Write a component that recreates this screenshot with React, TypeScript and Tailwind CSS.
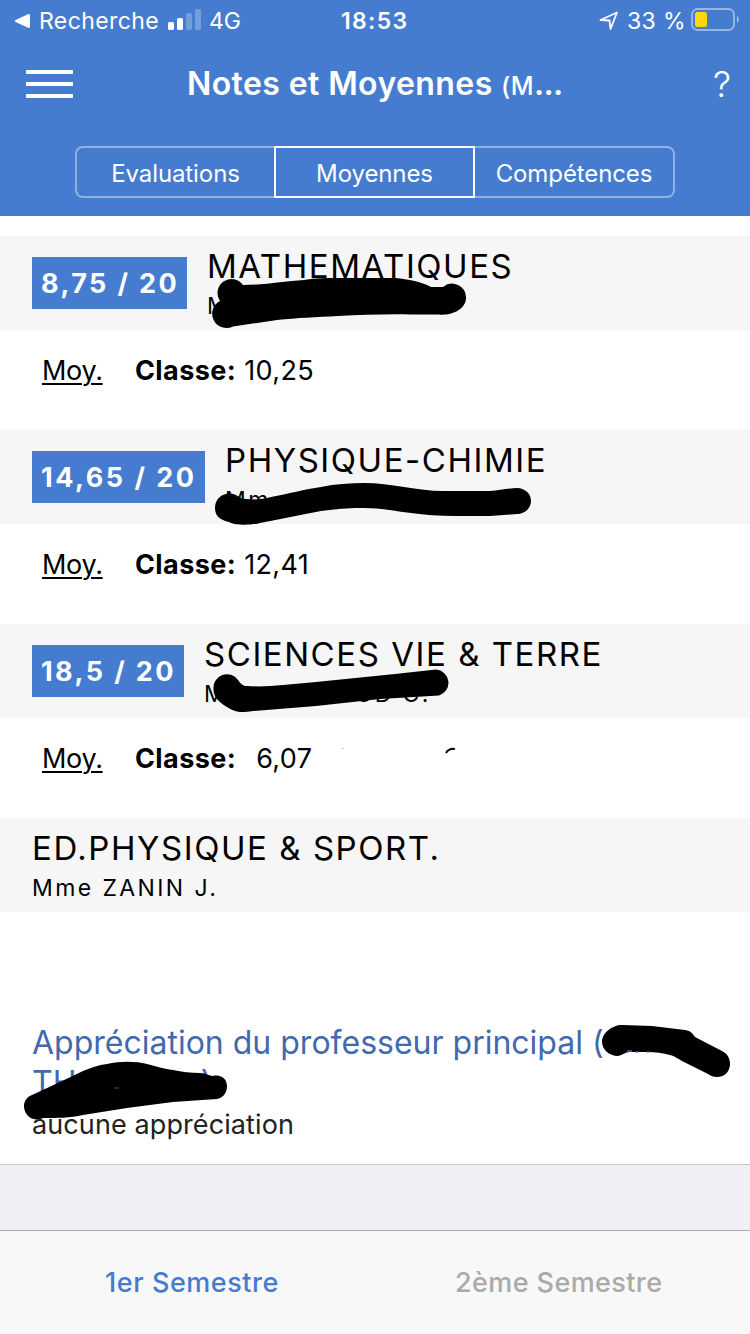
import React from 'react';
import clsx from 'clsx';

interface Subject {
    name: string;
    teacher: React.ReactNode;
    grade?: string;
    average?: string;
    averageClass?: string;
    badgeClass?: string;
}

const subjects: Subject[] = [
    { name: 'MATHEMATIQUES', teacher: 'M', grade: '8,75 / 20', average: '10,25', badgeClass: 'w-[155px] tracking-[2.4px]' },
    { name: 'PHYSIQUE-CHIMIE', teacher: 'Mm', grade: '14,65 / 20', average: '12,41', badgeClass: 'w-[173px] tracking-[2.5px]' },
    {
        name: 'SCIENCES VIE & TERRE',
        teacher: <>M<span className="ml-[128px]">UD C.</span></>,
        grade: '18,5 / 20',
        average: '6,07',
        averageClass: 'ml-[12px]',
        badgeClass: 'w-[152px] tracking-[2.4px]',
    },
    { name: 'ED.PHYSIQUE & SPORT.', teacher: 'Mme ZANIN J.' },
];

const tabs = ['Evaluations', 'Moyennes', 'Compétences'];

// Marker strokes hiding the names
const strokes = [
    'M220 301A13.500 13.500 0 0 1 243 285C264 285 285 281 304 280C316 278 326 278 338 278H396C407 279 423 282 431 287H443A14 14 0 0 1 466 298C466 309 452 316 439 314.500H410C385 314 362 315 338 316C316 317 297 318 277 320L233 326.500A13.500 13.500 0 0 1 220 301Z',
    'M215 508C215 497 225 492 233 494C240 496 240 499 246 499C255 500 264 499 271 497C288 494 305 489 321 487C335 484 350 483 364 483C378 483 390 485 404 487C418 489 430 491 443 491H490C501 490 509 488 518 488C526 489 531 494 531 501C531 508 525 514 517 514L490 516H455C439 516 425 515 411 513C395 511 380 508 364 508C349 508 335 509 321 511C300 515 281 519 260 523C253 525 236 526 229 522C220 520 215 516 215 508Z',
    'M213.500 689A13.500 13.500 0 0 1 238 680C241 684 243 686 247 686C260 687 271 686 283 685L316 682L395 674L436 669.500A13.300 13.300 0 0 1 439 695.500L380 699L316 706L253 711C239 713 235 712 227 707C220 703 213 697 213.500 689Z',
    'M24 1106C24 1101 27 1097 32 1095L60 1082L83 1071C91 1068 98 1065 107 1064C120 1061 135 1061 147 1064C156 1066 164 1069 173 1070C182 1072 191 1073 200 1073C206 1073 209 1076 213 1076C222 1074 227 1080 227 1086C227 1094 222 1098 217 1099L173 1102L127 1108L83 1115C70 1118 57 1118 43 1118C31 1123 24 1114 24 1106Z',
    'M602 1042C602 1033 612 1025 622 1025L652 1026L685 1030C691 1031 693 1034 695 1037L722 1051C728 1054 730 1059 730 1064C730 1071 725 1077 717 1077C713 1077 711 1076 708 1074L682 1061C678 1059 675 1056 670 1055C663 1053 655 1052 648 1052H630C625 1052 623 1055 618 1056C609 1056 602 1049 602 1042Z',
];

const StatusBar: React.FC = () => (
    <div className="flex h-[41px] items-center pt-px text-[23px] text-white">
        <svg className="ml-[14px]" width="17" height="16" viewBox="0 0 17 16">
            <path d="M1.5 7Q0 8 1.5 9L14 14.8Q16 15.5 16 13.5V2.5Q16 .5 14 1.2Z" fill="#fff" />
        </svg>
        <span className="ml-[8px] w-[129px] tracking-[0.4px]">Recherche</span>
        <svg className="-mt-[2px]" width="34" height="22" viewBox="0 0 34 22" fill="#fff">
            <rect x="0" y="13" width="6" height="8" rx="1.5" />
            <rect x="9" y="9" width="6" height="12" rx="1.5" />
            <rect x="18" y="4" width="6" height="17" rx="1.5" opacity=".25" />
            <rect x="27" y="0" width="6" height="21" rx="1.5" opacity=".25" />
        </svg>
        <span className="ml-[7px] w-[132px]">4G</span>
        <span className="w-[258px] font-semibold tracking-[1.3px]">18:53</span>
        <svg width="20" height="20" viewBox="0 0 20 20" fill="none" stroke="#fff" strokeWidth="1.8" strokeLinejoin="round">
            <path d="M1.5 9L18 1.5L11.500 18L10.500 9.500Z" />
        </svg>
        <span className="ml-[8px] w-[64px] tracking-[0.4px] whitespace-nowrap">33 %</span>
        <svg className="-mt-[2px]" width="50" height="24" viewBox="0 0 50 24">
            <rect x="1" y="1" width="42" height="21" rx="5.5" fill="none" stroke="#fff" strokeOpacity=".45" strokeWidth="1.8" />
            <rect x="4" y="4" width="12" height="15" rx="2.5" fill="#fed709" />
            <path d="M46 8C48.500 9.500 48.500 13.500 46 15Z" fill="#fff" fillOpacity=".5" />
        </svg>
    </div>
);

const SubjectRow: React.FC<{ subject: Subject }> = ({ subject }) => (
    <section className="h-[194px]">
        <div className="flex h-[94px] bg-[#f6f6f6] pl-8">
            {subject.grade && (
                <div className={clsx('mt-[21px] mr-5 flex h-[52px] shrink-0 items-center bg-[#467ccf] pt-[2px] pl-[9px] text-[27px] font-bold whitespace-nowrap text-white', subject.badgeClass)}>
                    {subject.grade}
                </div>
            )}
            <div className="whitespace-nowrap">
                <h2 className="mt-[10px] h-10 text-[33px] leading-10 tracking-[1.55px]">{subject.name}</h2>
                <p className="mt-[5px] text-[23px] leading-[30px] tracking-[2.4px]">{subject.teacher}</p>
            </div>
        </div>
        {subject.average && (
            <div className="flex h-[82px] items-center pl-[42px] text-[27px]">
                <span className="w-[93px] tracking-[-0.3px] underline decoration-2 underline-offset-3">Moy.</span>
                <b className="mr-[8px] font-bold tracking-[0.4px]">Classe:</b>
                <span className={clsx('tracking-[0.4px]', subject.averageClass)}>{subject.average}</span>
            </div>
        )}
    </section>
);

export default function App() {
    return (
        <div className="relative h-[1334px] w-[750px] overflow-hidden bg-white font-['Inter','Liberation_Sans',sans-serif] text-black">
            {/* Header */}
            <header className="h-[216px] bg-[#467ccf] text-white">
                <StatusBar />
                <div className="flex h-[85px] items-center">
                    <div className="ml-[26px] flex w-[161px] flex-col gap-[8px]">
                        <i className="h-1 w-[47px] bg-white" />
                        <i className="h-1 w-[47px] bg-white" />
                        <i className="h-1 w-[47px] bg-white" />
                    </div>
                    <h1 className="w-[526px] text-[32px] font-semibold tracking-[0.4px] whitespace-nowrap">
                        Notes et Moyennes <span className="text-[25px] font-medium">(M</span><span className="tracking-[-0.8px]">...</span>
                    </h1>
                    <span className="text-[36px] font-light">?</span>
                </div>
                <div className="mt-[20px] ml-[75px] grid h-[52px] w-[600px] grid-cols-[199px_201px_200px] text-center text-[24px] leading-[51px] tracking-[-0.1px]">
                    <div className="h-[52px] rounded-l-lg border-2 border-r-0 border-white/40">{tabs[0]}</div>
                    <div className="h-[52px] border-2 border-white">{tabs[1]}</div>
                    <div className="h-[52px] rounded-r-lg border-2 border-l-0 border-white/40">{tabs[2]}</div>
                </div>
            </header>

            {/* Subjects */}
            <main className="h-[948px] pt-5">
                {subjects.map(s => <SubjectRow key={s.name} subject={s} />)}
                <div className="pt-[11px] pl-8">
                    <h3 className="text-[32px] leading-10 whitespace-nowrap text-[#4269ad]">
                        Appréciation du professeur principal (<br />
                        TH<span className="ml-[124px]">)</span>
                    </h3>
                    <p className="mt-[2px] text-[27px] leading-[40px] tracking-[0.1px] text-[#222]">aucune appréciation</p>
                </div>
            </main>

            {/* Semesters */}
            <div className="h-[67px] border-t border-b border-t-[#c8c7cc] border-b-[#a9a8b0] bg-[#efeff4]" />
            <footer className="grid h-[103px] grid-cols-2 items-center bg-[#f8f8f8] pt-[2px] text-[27px] font-medium tracking-[0.55px]">
                <span className="pl-[105px] text-[#467ccf]">1er Semestre</span>
                <span className="pl-[80px] tracking-[0.4px] text-[#aaa]">2ème Semestre</span>
            </footer>

            <svg className="pointer-events-none absolute inset-0" width="750" height="1334" viewBox="0 0 750 1334">
                {strokes.map(d => <path key={d} d={d} />)}
                <path d="M446 753Q449 748 455 749" fill="none" stroke="#000" strokeWidth="2" />
                <path d="M343 748V749" stroke="#999" />
                <path d="M114 1088H119" stroke="#777" strokeWidth=".7" />
                <path d="M627 1051H632M637 1051V1053M648 1051V1053" stroke="#4269ad" strokeWidth="1.5" />
            </svg>
        </div>
    );
}
